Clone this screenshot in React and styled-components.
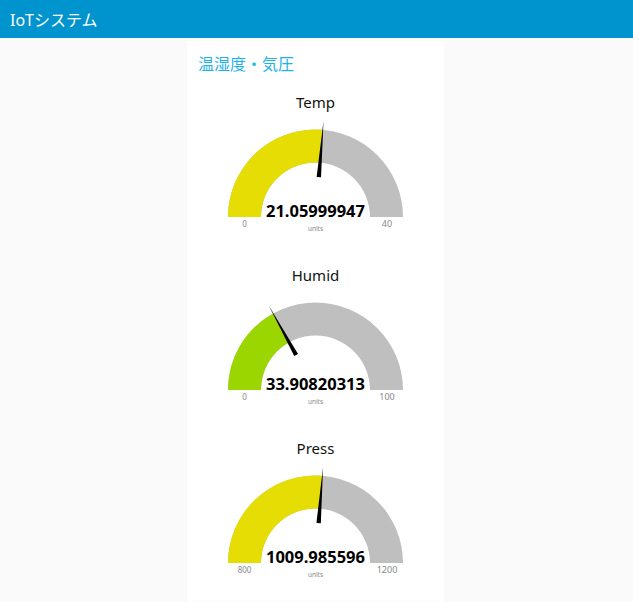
import React from "react";
import styled, { createGlobalStyle } from "styled-components";

const GlobalStyle = createGlobalStyle`
  html, body {
    margin: 0;
    padding: 0;
    background: #fafafa;
    font-family: "Noto Sans", "Noto Sans CJK JP", sans-serif;
  }
`;

const Page = styled.div`
  width: 633px;
  height: 602px;
  overflow: hidden;
  background: #fafafa;
`;

const Toolbar = styled.header`
  height: 38px;
  background: #0094ce;
  color: #fff;
  display: flex;
  align-items: center;
  padding-left: 10px;
  font-size: 16px;
  font-family: "Noto Sans", "Noto Sans CJK JP", sans-serif;
`;

const Content = styled.main`
  display: flex;
  padding-top: 3px;
  padding-left: 187px;
`;

const Group = styled.section`
  width: 257px;
  height: 560px;
  background: #fff;
  overflow: hidden;
`;

const GroupTitle = styled.h2`
  margin: 0;
  height: 46px;
  padding: 10px 0 0 11px;
  box-sizing: border-box;
  font-size: 16px;
  font-weight: 400;
  color: #1fb2ea;
  font-family: "Noto Sans CJK JP", sans-serif;
`;

const GaugeBox = styled.div`
  height: 173px;
  display: flex;
  flex-direction: column;
  align-items: center;
`;

const GaugeTitle = styled.div`
  height: 32px;
  line-height: 30px;
  font-size: 15px;
  color: #111;
  text-align: center;
`;

const GaugeSvg = styled.svg`
  display: block;
  width: 257px;
  height: 141px;
  font-family: "Noto Sans", sans-serif;
`;

const mix = (a, b, t) => {
  const pa = [1, 3, 5].map((i) => parseInt(a.slice(i, i + 2), 16));
  const pb = [1, 3, 5].map((i) => parseInt(b.slice(i, i + 2), 16));
  return (
    "#" +
    pa
      .map((v, i) => Math.round(v + (pb[i] - v) * t).toString(16).padStart(2, "0"))
      .join("")
  );
};

const levelColor = (p) =>
  p < 0.5 ? mix("#00b500", "#e6e600", p * 2) : mix("#e6e600", "#ca3838", (p - 0.5) * 2);

const CX = 128.5;
const CY = 98;
const R = 87.5;
const r = 54.5;

const pt = (a, rad) => [CX + rad * Math.cos(a), CY - rad * Math.sin(a)];

const arc = (p) => {
  const a = Math.PI * (1 - p);
  const [x1, y1] = pt(Math.PI, R);
  const [x2, y2] = pt(a, R);
  const [x3, y3] = pt(a, r);
  const [x4, y4] = pt(Math.PI, r);
  return `M${x1},${y1} A${R},${R} 0 0 1 ${x2},${y2} L${x3},${y3} A${r},${r} 0 0 0 ${x4},${y4} Z`;
};

const needle = (p) => {
  const a = Math.PI * (1 - p);
  const [bx, by] = pt(a, 40);
  const [tx, ty] = pt(a, 96);
  const nx = Math.sin(a) * 2.2;
  const ny = Math.cos(a) * 2.2;
  return `M${bx - nx},${by - ny} L${tx},${ty} L${bx + nx},${by + ny} Z`;
};

const Gauge = ({ title, value, min, max }) => {
  const p = Math.min(1, Math.max(0, (value - min) / (max - min)));
  return (
    <GaugeBox>
      <GaugeTitle>{title}</GaugeTitle>
      <GaugeSvg viewBox="0 0 257 141">
        <path d={arc(1)} fill="#bfbfbf" />
        <path d={arc(p)} fill={levelColor(p)} />
        <path d={needle(p)} fill="#000" />
        <text x={CX} y={CY} textAnchor="middle" fontSize="16.5" fontWeight="700" fill="#000">
          {value}
        </text>
        <text x={CX - 71} y={CY + 10} textAnchor="middle" fontSize="8" fill="#888">
          {min}
        </text>
        <text x={CX + 71.5} y={CY + 10} textAnchor="middle" fontSize="9" fill="#888">
          {max}
        </text>
        <text x={CX} y={CY + 14} textAnchor="middle" fontSize="6.5" fill="#888">
          units
        </text>
      </GaugeSvg>
    </GaugeBox>
  );
};

const gauges = [
  { title: "Temp", value: "21.05999947", min: 0, max: 40 },
  { title: "Humid", value: "33.90820313", min: 0, max: 100 },
  { title: "Press", value: "1009.985596", min: 800, max: 1200 },
];

export default function App() {
  return (
    <Page>
      <GlobalStyle />
      <Toolbar>IoTシステム</Toolbar>
      <Content>
        <Group>
          <GroupTitle>温湿度・気圧</GroupTitle>
          {gauges.map((g) => (
            <Gauge key={g.title} {...g} />
          ))}
        </Group>
      </Content>
    </Page>
  );
}
